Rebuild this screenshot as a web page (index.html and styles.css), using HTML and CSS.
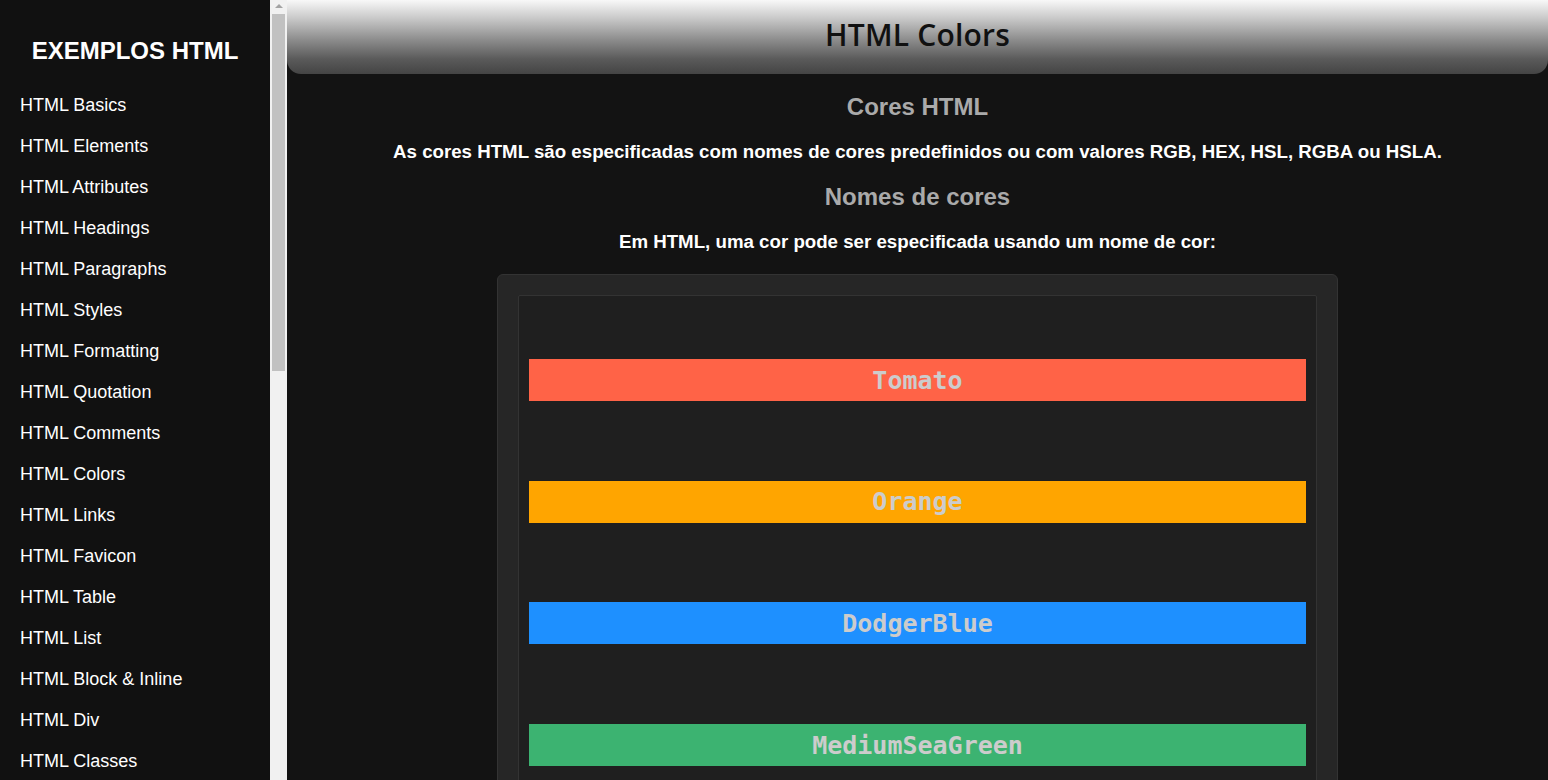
FILE: index.html
```html
<!DOCTYPE html>
<html lang="pt">
<head>
<meta charset="utf-8">
<title>HTML Colors</title>
<link rel="stylesheet" href="styles.css">
</head>
<body>
<div class="layout">
  <aside class="sidebar">
    <nav class="nav">
      <h2 class="nav-title">EXEMPLOS HTML</h2>
      <ul class="nav-list">
        <li><a href="#">HTML Basics</a></li>
        <li><a href="#">HTML Elements</a></li>
        <li><a href="#">HTML Attributes</a></li>
        <li><a href="#">HTML Headings</a></li>
        <li><a href="#">HTML Paragraphs</a></li>
        <li><a href="#">HTML Styles</a></li>
        <li><a href="#">HTML Formatting</a></li>
        <li><a href="#">HTML Quotation</a></li>
        <li><a href="#">HTML Comments</a></li>
        <li><a href="#">HTML Colors</a></li>
        <li><a href="#">HTML Links</a></li>
        <li><a href="#">HTML Favicon</a></li>
        <li><a href="#">HTML Table</a></li>
        <li><a href="#">HTML List</a></li>
        <li><a href="#">HTML Block &amp; Inline</a></li>
        <li><a href="#">HTML Div</a></li>
        <li><a href="#">HTML Classes</a></li>
      </ul>
    </nav>
    <div class="scrollbar">
      <div class="scroll-arrow"></div>
      <div class="scroll-thumb"></div>
    </div>
  </aside>
  <main class="main">
    <header class="page-header">
      <h1 class="page-title">HTML Colors</h1>
    </header>
    <section class="content">
      <h2 class="section-title">Cores HTML</h2>
      <p class="lead">As cores HTML são especificadas com nomes de cores predefinidos ou com valores RGB, HEX, HSL, RGBA ou HSLA.</p>
      <h2 class="section-title">Nomes de cores</h2>
      <p class="lead">Em HTML, uma cor pode ser especificada usando um nome de cor:</p>
      <div class="example">
        <div class="example-inner">
          <div class="swatch swatch-tomato">Tomato</div>
          <div class="swatch swatch-orange">Orange</div>
          <div class="swatch swatch-blue">DodgerBlue</div>
          <div class="swatch swatch-green">MediumSeaGreen</div>
        </div>
      </div>
    </section>
  </main>
</div>
</body>
</html>
```

FILE: styles.css
```css
* { box-sizing: border-box; }

html, body {
  margin: 0;
  padding: 0;
  height: 100%;
  overflow: hidden;
}

body {
  background: #131313;
  font-family: "Liberation Sans", Arial, sans-serif;
  color: #fff;
}

.layout {
  display: flex;
  height: 780px;
}

.sidebar {
  display: flex;
  width: 287px;
  flex: 0 0 287px;
  height: 100%;
  overflow: hidden;
}

.nav {
  width: 270px;
  background: #111111;
  height: 100%;
  overflow: hidden;
}

.nav-title {
  margin: 0;
  padding-top: 37px;
  height: 84px;
  text-align: center;
  font-size: 24px;
  font-weight: bold;
  line-height: 28px;
  color: #fff;
}

.nav-list {
  list-style: none;
  margin: 0;
  padding: 0;
}

.nav-list li {
  height: 41px;
  display: flex;
  align-items: center;
  padding-left: 20px;
}

.nav-list a {
  color: #fff;
  text-decoration: none;
  font-size: 18px;
  line-height: 20px;
}

.scrollbar {
  width: 17px;
  background: #f1f1f1;
  height: 100%;
  display: flex;
  flex-direction: column;
  align-items: center;
}

.scroll-arrow {
  margin-top: 4px;
  width: 0;
  height: 0;
  border-left: 4px solid transparent;
  border-right: 4px solid transparent;
  border-bottom: 4px solid #a3a3a3;
  margin-bottom: 6px;
}

.scroll-thumb {
  width: 13px;
  height: 357px;
  background: #c1c1c1;
}

.main {
  flex: 1;
  height: 100%;
  overflow: hidden;
}

.page-header {
  height: 74px;
  background: linear-gradient(to bottom, #f8f8f8 0%, #c8c8c8 25%, #8a8a8a 55%, #5a5a5a 80%, #444444 100%);
  border-radius: 0 0 14px 14px;
  display: flex;
  align-items: center;
  justify-content: center;
}

.page-title {
  margin: 0;
  font-family: "Open Sans", "Noto Sans", sans-serif;
  font-weight: 600;
  font-size: 30px;
  color: #111;
  letter-spacing: 0.2px;
  padding-bottom: 5px;
}

.content {
  display: flex;
  flex-direction: column;
  align-items: center;
  gap: 20px;
  padding-top: 19px;
}

.section-title {
  margin: 0;
  font-size: 24px;
  line-height: 28px;
  font-weight: bold;
  color: #aaaaaa;
}

.lead {
  margin: 0;
  font-size: 18.7px;
  line-height: 22px;
  font-weight: bold;
  color: #fff;
}

.example {
  width: 66.67%;
  margin-top: 1px;
  background: #262626;
  border: 1px solid #333;
  border-radius: 6px;
  padding: 20px;
}

.example-inner {
  background: #1f1f1f;
  border: 1px solid #333;
  border-radius: 2px;
  padding: 63px 10px 80px;
  display: flex;
  flex-direction: column;
  gap: 79.7px;
}

.swatch {
  height: 42px;
  display: flex;
  align-items: center;
  justify-content: center;
  font-family: "DejaVu Sans Mono", "Liberation Mono", monospace;
  font-weight: bold;
  font-size: 25px;
  color: #cccccc;
}

.swatch-tomato { background: tomato; }
.swatch-orange { background: orange; }
.swatch-blue { background: dodgerblue; }
.swatch-green { background: mediumseagreen; }
```
